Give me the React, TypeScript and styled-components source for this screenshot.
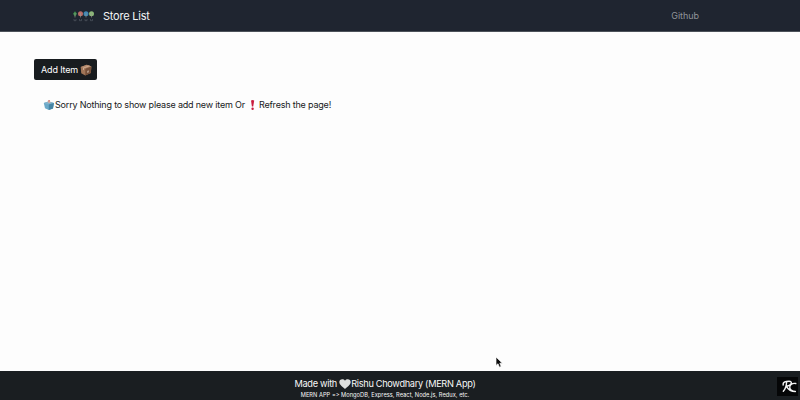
import React from "react";
import styled, { createGlobalStyle } from "styled-components";

const GlobalStyle = createGlobalStyle`
  * { box-sizing: border-box; }
  html, body, #root { height: 100%; margin: 0; }
  body {
    background: #fdfdfd;
    color: #212529;
    font-family: Inter, "Liberation Sans", sans-serif;
    font-feature-settings: "calt" 0;
    overflow: hidden;
  }
`;

const Page = styled.div`
  height: 100vh;
  display: flex;
  flex-direction: column;
`;

const Navbar = styled.header`
  height: 32px;
  flex: none;
  display: flex;
  align-items: center;
  justify-content: space-between;
  padding: 0 101px 0 72px;
  background: #1f2530;
  border-bottom: 1px solid #4c525a;
`;

const Brand = styled.div`
  display: flex;
  align-items: center;
  gap: 8px;
  color: #f4f5f6;
  font-size: 11px;
  line-height: 16px;
  letter-spacing: -0.23px;
`;

const NavLink = styled.a`
  color: #90949a;
  font-size: 9px;
  line-height: 14px;
  letter-spacing: -0.05px;
  text-decoration: none;
`;

const Main = styled.main`
  flex: 1;
  display: flex;
  flex-direction: column;
  align-items: flex-start;
  padding: 27px 34px 0;
`;

const AddButton = styled.button`
  display: flex;
  align-items: center;
  gap: 2px;
  width: 63px;
  height: 21px;
  padding: 0 4px 0 7px;
  border: 0;
  border-radius: 2px;
  background: #181c1f;
  color: #ffffff;
  font: 9px/14px Inter, sans-serif;
  letter-spacing: -0.15px;
  white-space: nowrap;
`;

const Message = styled.p`
  display: flex;
  align-items: center;
  margin: 18px 0 0 9px;
  color: #17191b;
  font-size: 9px;
  line-height: 14px;
  letter-spacing: -0.19px;
  white-space: nowrap;
`;

const Footer = styled.footer`
  height: 29px;
  flex: none;
  display: grid;
  grid-template-columns: 23px 1fr 23px;
  background: #1a1e21;
`;

const Credits = styled.div`
  grid-column: 2;
  display: flex;
  flex-direction: column;
  align-items: center;
  padding: 6px 30px 0 0;
  color: #f8f8f8;
`;

const Author = styled.div`
  display: flex;
  align-items: center;
  height: 14px;
  font-size: 9.2px;
  line-height: 14px;
  letter-spacing: -0.31px;
  white-space: nowrap;
`;

const Stack = styled.div`
  font-size: 5.7px;
  line-height: 7px;
  letter-spacing: 0.03px;
  white-space: nowrap;
`;

const Badge = styled.div`
  grid-column: 3;
  width: 21px;
  height: 19px;
  margin-top: 6px;
  background: #050607;
`;

const Pointer = styled.svg`
  position: absolute;
  left: 495px;
  top: 356px;
`;

const trees = [
  { x: 3, color: "#3f8f4c", letter: "M" },
  { x: 8.5, color: "#b96c68", letter: "E" },
  { x: 14, color: "#4187b5", letter: "R" },
  { x: 19.5, color: "#8bb778", letter: "N" },
];

const MernLogo = () => (
  <svg width="23" height="14" viewBox="0 0 23 14">
    {trees.map((t, i) => (
      <g key={t.letter}>
        {i === 0 ? (
          <path d="M3 2.2 5 4.8 3 7.4 1 4.8Z" fill={t.color} />
        ) : (
          <circle cx={t.x} cy="4.8" r="2.5" fill={t.color} />
        )}
        <path d={`M${t.x} 4v4.5`} stroke="#9a9b8d" strokeWidth=".6" />
        <path d={`M${t.x - 1} 10v1.7h2V10`} stroke="#626872" strokeWidth=".5" fill="none" />
      </g>
    ))}
  </svg>
);

const BoxIcon = () => (
  <svg width="12" height="12" viewBox="0 0 12 12">
    <path d="M.7 3 6.8.8 11.4 2.5 10.8 9 5.3 11.4 1.2 9.2Z" fill="#a07557" />
    <path d="M.7 3 6.8.8 11.4 2.5 5.3 4.7Z" fill="#b38a6d" />
    <path d="m5.3 4.7 6.1-2.2-.6 6.5-5.5 2.4Z" fill="#765039" />
    <path d="m3 3.8 6-2.2 1 .4-6 2.3v2L3 5.8Z" fill="#d1ad91" />
    <path d="m7 7 2-.8v2L7 9Z" fill="#ae9482" />
  </svg>
);

const BallotIcon = () => (
  <svg width="12" height="12" viewBox="0 0 12 12">
    <path d="m.8 4 4.8-1.5L11 4l-1 5.5L5.8 11 2 9.3Z" fill="#6ba9c8" />
    <path d="m.8 4 4.8-1.5L11 4 5.8 5.6Z" fill="#83b3cb" />
    <path d="M5.8 5.6 11 4l-1 5.5L5.8 11Z" fill="#4785a4" />
    <path d="m4.5 2 2-.8 1.2 2.3-2 .8Z" fill="#d5aaa0" />
    <path d="m5.2 1.5 1.2-.5.5 1.1-1.2.5Z" fill="#c75b50" />
  </svg>
);

const AlertIcon = () => (
  <svg width="14" height="12" viewBox="0 0 14 12">
    <path d="M6 1.5q1.7-.8 3.2 0L8.2 7.6H6.9Z" fill="#c91c3e" />
    <circle cx="7.6" cy="9.7" r="1.2" fill="#c91c3e" />
  </svg>
);

const HeartIcon = () => (
  <svg width="12" height="12" viewBox="0 0 12 12">
    <path d="M6 11C4 9 .5 7 .3 4.2.1 1.2 4.2.1 6 2.7c1.8-2.6 5.9-1.5 5.7 1.5C11.5 7 8 9 6 11Z" fill="#dedfde" />
  </svg>
);

const MonogramIcon = () => (
  <svg width="21" height="19" viewBox="0 0 21 19" fill="none" stroke="#f4f4f4" strokeLinecap="round" strokeLinejoin="round">
    <path d="M6.2 8C5.5 4.8 9 4.2 12 4.2c4 0 2.7 4.5-2.6 5M9.6 5.5C9.3 9 8.3 12.3 6.3 14.3M9.4 9.3c1.6 2.8 3.5 5.2 9 5.2M18.8 6.5c-3.8-.8-6.6 1.8-6 4.5.4 2 2.3 3.3 5.6 3.5" strokeWidth="1.4" />
  </svg>
);

export default function App() {
  return (
    <>
      <GlobalStyle />
      <Page>
        <Navbar>
          <Brand><MernLogo /><span>Store List</span></Brand>
          <NavLink>Github</NavLink>
        </Navbar>
        <Main>
          <AddButton><span>Add Item</span><BoxIcon /></AddButton>
          <Message>
            <BallotIcon />
            <span>Sorry Nothing to show please add new item Or</span>
            <AlertIcon />
            <span>Refresh the page!</span>
          </Message>
        </Main>
        <Footer>
          <Credits>
            <Author><span>Made with&nbsp;</span><HeartIcon /><span>Rishu Chowdhary (MERN App)</span></Author>
            <Stack>MERN APP =&gt; MongoDB, Express, React, Node.js, Redux, etc.</Stack>
          </Credits>
          <Badge><MonogramIcon /></Badge>
        </Footer>
      </Page>
      <Pointer width="9" height="13" viewBox="0 0 9 13">
        <path d="M1 1v8.5l2-1.7 1.4 3.4 1.8-.8-1.4-3.2h2.6Z" fill="#0d0d0d" stroke="#fff" strokeWidth=".7" />
      </Pointer>
    </>
  );
}
